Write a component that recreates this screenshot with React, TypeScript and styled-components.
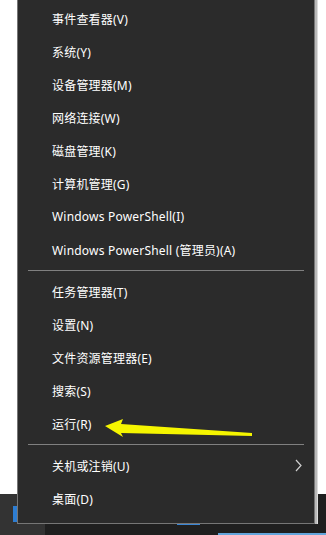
import React, { FC, Fragment } from 'react'
import styled, { createGlobalStyle } from 'styled-components';

const GlobalStyle = createGlobalStyle`
  html, body {
    margin: 0;
    padding: 0;
    background: #ffffff;
  }
`;

const Screen = styled.div`
  position: relative;
  width: 326px;
  height: 535px;
  overflow: hidden;
  display: flex;
  flex-direction: column;
  font-family: 'Noto Sans', 'Noto Sans CJK SC', sans-serif;
`;

const Desktop = styled.div`
  flex: 1;
  background: #ffffff;
`;

const Taskbar = styled.div`
  height: 41px;
  display: flex;
  flex-direction: row;
  background: #1f1f1f;
`;

const StartTile = styled.div`
  width: 45px;
  background: #333333;
  display: flex;
  align-items: flex-start;
  padding: 12px 0 0 13px;
  box-sizing: border-box;
`;

const ActiveMark = styled.div`
  width: 4px;
  height: 16px;
  background: #2d7dd2;
`;

const AppMark = styled.div<{ $left: number; $width: number; $height: number; $top: number; $color: string }>`
  margin-left: ${p => p.$left}px;
  margin-top: ${p => p.$top}px;
  width: ${p => p.$width}px;
  height: ${p => p.$height}px;
  background: ${p => p.$color};
`;

const Menu = styled.div`
  position: absolute;
  left: 17px;
  top: -7px;
  width: 296px;
  padding: 8px 0 8px 0;
  background: #2b2b2b;
  border: 1px solid #767676;
  box-shadow: 2px 0 0 #b9b9b9, 3px 0 0 #dcdcdc;
`;

const MenuItem = styled.div`
  height: 33px;
  display: flex;
  align-items: center;
  justify-content: space-between;
  padding: 0 12px 0 34px;
  color: #ffffff;
  font-size: 12px;
  letter-spacing: 0.2px;
  white-space: nowrap;
`;

const Separator = styled.div`
  height: 1px;
  margin: 4px 10px;
  background: #808080;
`;

const Chevron = () => (
  <svg width="7" height="13" viewBox="0 0 7 13">
    <polyline points="1,1 6,6.5 1,12" fill="none" stroke="#cfcfcf" strokeWidth="1.2" />
  </svg>
);

const Arrow = styled.svg`
  position: absolute;
  left: 0;
  top: 0;
  pointer-events: none;
`;

const groups: { label: string; sub?: boolean }[][] = [
  [
    { label: '事件查看器(V)' },
    { label: '系统(Y)' },
    { label: '设备管理器(M)' },
    { label: '网络连接(W)' },
    { label: '磁盘管理(K)' },
    { label: '计算机管理(G)' },
    { label: 'Windows PowerShell(I)' },
    { label: 'Windows PowerShell (管理员)(A)' },
  ],
  [
    { label: '任务管理器(T)' },
    { label: '设置(N)' },
    { label: '文件资源管理器(E)' },
    { label: '搜索(S)' },
    { label: '运行(R)' },
  ],
  [
    { label: '关机或注销(U)', sub: true },
    { label: '桌面(D)' },
  ],
];

const App: FC = () => {
  return (
    <Screen>
      <GlobalStyle />
      <Desktop />
      <Taskbar>
        <StartTile>
          <ActiveMark />
        </StartTile>
        <AppMark $left={132} $top={28} $width={23} $height={3} $color="#3a86d6" />
        <AppMark $left={18} $top={39} $width={108} $height={2} $color="#63a6dc" />
      </Taskbar>
      <Menu>
        {groups.map((group, gi) => (
          <Fragment key={gi}>
            {gi > 0 ? <Separator /> : null}
            {group.map(item => (
              <MenuItem key={item.label}>
                <span>{item.label}</span>
                {item.sub ? <Chevron /> : null}
              </MenuItem>
            ))}
          </Fragment>
        ))}
      </Menu>
      <Arrow width="326" height="535" viewBox="0 0 326 535">
        <polygon
          points="105,426 123,419 121,424 252,433 252,436 121,433 123,437"
          fill="#f5f500"
        />
      </Arrow>
    </Screen>
  )
}

export default App;
